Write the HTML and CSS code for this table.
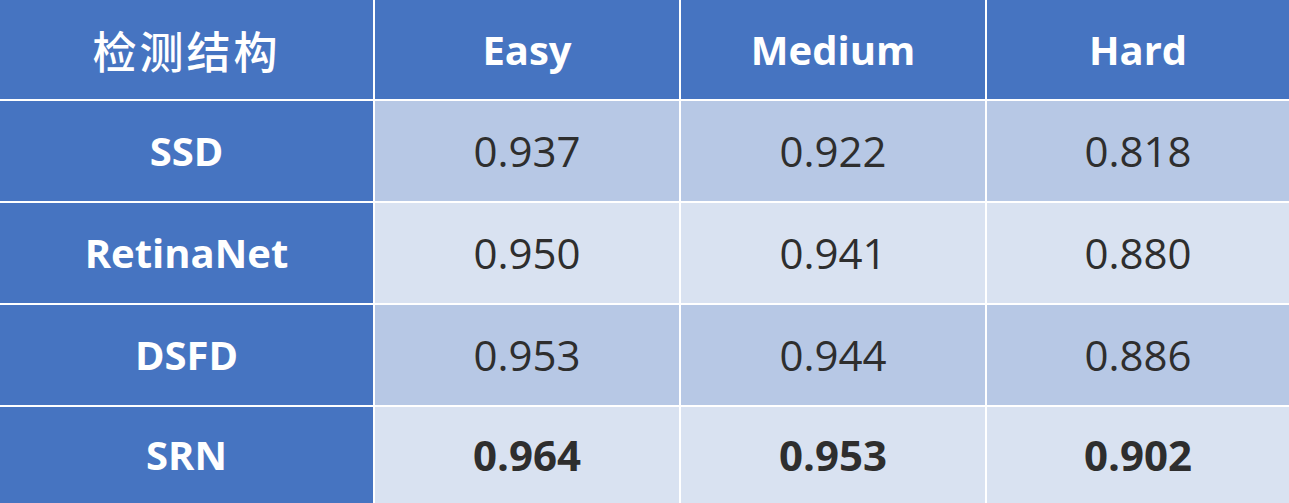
FILE: index.html
```html
<!DOCTYPE html>
<html lang="zh">
<head>
<meta charset="utf-8">
<title>检测结构</title>
<link rel="stylesheet" href="styles.css">
</head>
<body>
<div class="table">
  <div class="cell head cjk">检测结构</div>
  <div class="cell head">Easy</div>
  <div class="cell head">Medium</div>
  <div class="cell head">Hard</div>

  <div class="cell label">SSD</div>
  <div class="cell odd">0.937</div>
  <div class="cell odd">0.922</div>
  <div class="cell odd">0.818</div>

  <div class="cell label">RetinaNet</div>
  <div class="cell even">0.950</div>
  <div class="cell even">0.941</div>
  <div class="cell even">0.880</div>

  <div class="cell label">DSFD</div>
  <div class="cell odd">0.953</div>
  <div class="cell odd">0.944</div>
  <div class="cell odd">0.886</div>

  <div class="cell label">SRN</div>
  <div class="cell even best">0.964</div>
  <div class="cell even best">0.953</div>
  <div class="cell even best">0.902</div>
</div>
</body>
</html>
```

FILE: styles.css
```css
html, body {
  margin: 0;
  padding: 0;
  background: #ffffff;
}

.table {
  width: 1289px;
  height: 503px;
  display: grid;
  grid-template-columns: 373px 304px 304px 1fr;
  grid-template-rows: 99px 100px 100px 100px 1fr;
  gap: 2px;
  background: #ffffff;
  font-family: "Open Sans", "Liberation Sans", sans-serif;
}

.cell {
  display: flex;
  align-items: center;
  justify-content: center;
  font-size: 42px;
  color: #2e2e2e;
  line-height: 1;
}

.head,
.label {
  background: #4674c1;
  color: #ffffff;
  font-weight: 700;
  font-size: 40px;
}

.cjk {
  font-family: "Noto Sans CJK SC", "Noto Sans", sans-serif;
  font-weight: 500;
  font-size: 44px;
  letter-spacing: 3px;
}

.odd {
  background: #b7c8e5;
}

.even {
  background: #d9e2f1;
}

.best {
  font-weight: 700;
}
```
